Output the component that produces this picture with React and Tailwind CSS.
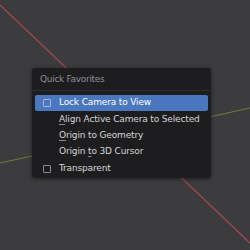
import React from "react";

const items = [
  { pre: "", key: "L", post: "ock Camera to View", check: true, active: true, mark: false },
  { pre: "", key: "A", post: "lign Active Camera to Selected", mark: true },
  { pre: "", key: "O", post: "rigin to Geometry", mark: true },
  { pre: "Origin ", key: "t", post: "o 3D Cursor", mark: true },
  { pre: "", key: "T", post: "ransparent", check: true, mark: false },
];

const Row = ({ item }) => (
  <div
    className={`flex items-center h-[16px] pl-[8px] rounded-[2px] ${
      item.active ? "bg-[#4a77bd] text-white" : "text-[#d6d6d6]"
    }`}
  >
    <span className="w-[16px] shrink-0 flex items-center">
      {item.check && (
        <span
          className={`block w-[8px] h-[8px] border rounded-[1px] ${
            item.active ? "border-[#9fb7dd]" : "border-[#8a8a8a]"
          }`}
        />
      )}
    </span>
    <span className="whitespace-nowrap">
      {item.pre}
      <span className={item.mark ? "underline decoration-[#8a8a8a] underline-offset-2" : ""}>
        {item.key}
      </span>
      {item.post}
    </span>
  </div>
);

export default function App() {
  return (
    <div
      className="relative w-[250px] h-[250px] overflow-hidden bg-[#3c3c3e]"
      style={{ fontFamily: '"DejaVu Sans", sans-serif' }}
    >
      <svg className="absolute inset-0" width="250" height="250">
        <line x1="0" y1="5" x2="250" y2="243" stroke="#b0474c" strokeWidth="1.2" />
        <line x1="0" y1="163" x2="250" y2="108" stroke="#6c7a3a" strokeWidth="1" />
      </svg>
      <div className="absolute left-[32px] top-[68px] w-[179px] h-[110px] bg-[#1d1c1f] rounded-[3px] shadow-[0_1px_4px_rgba(0,0,0,0.5)] flex flex-col px-[3px]">
        <div className="h-[22px] flex items-center pl-[5px] pt-[1px] text-[9px] tracking-[-0.3px] text-[#8e8e8e]">
          Quick Favorites
        </div>
        <div className="h-px bg-[#2c2b2e] mx-[-3px]" />
        <div className="flex flex-col gap-[0.4px] pt-[4px] text-[9px] tracking-[-0.15px]">
          {items.map((it, i) => (
            <Row key={i} item={it} />
          ))}
        </div>
      </div>
    </div>
  );
}
